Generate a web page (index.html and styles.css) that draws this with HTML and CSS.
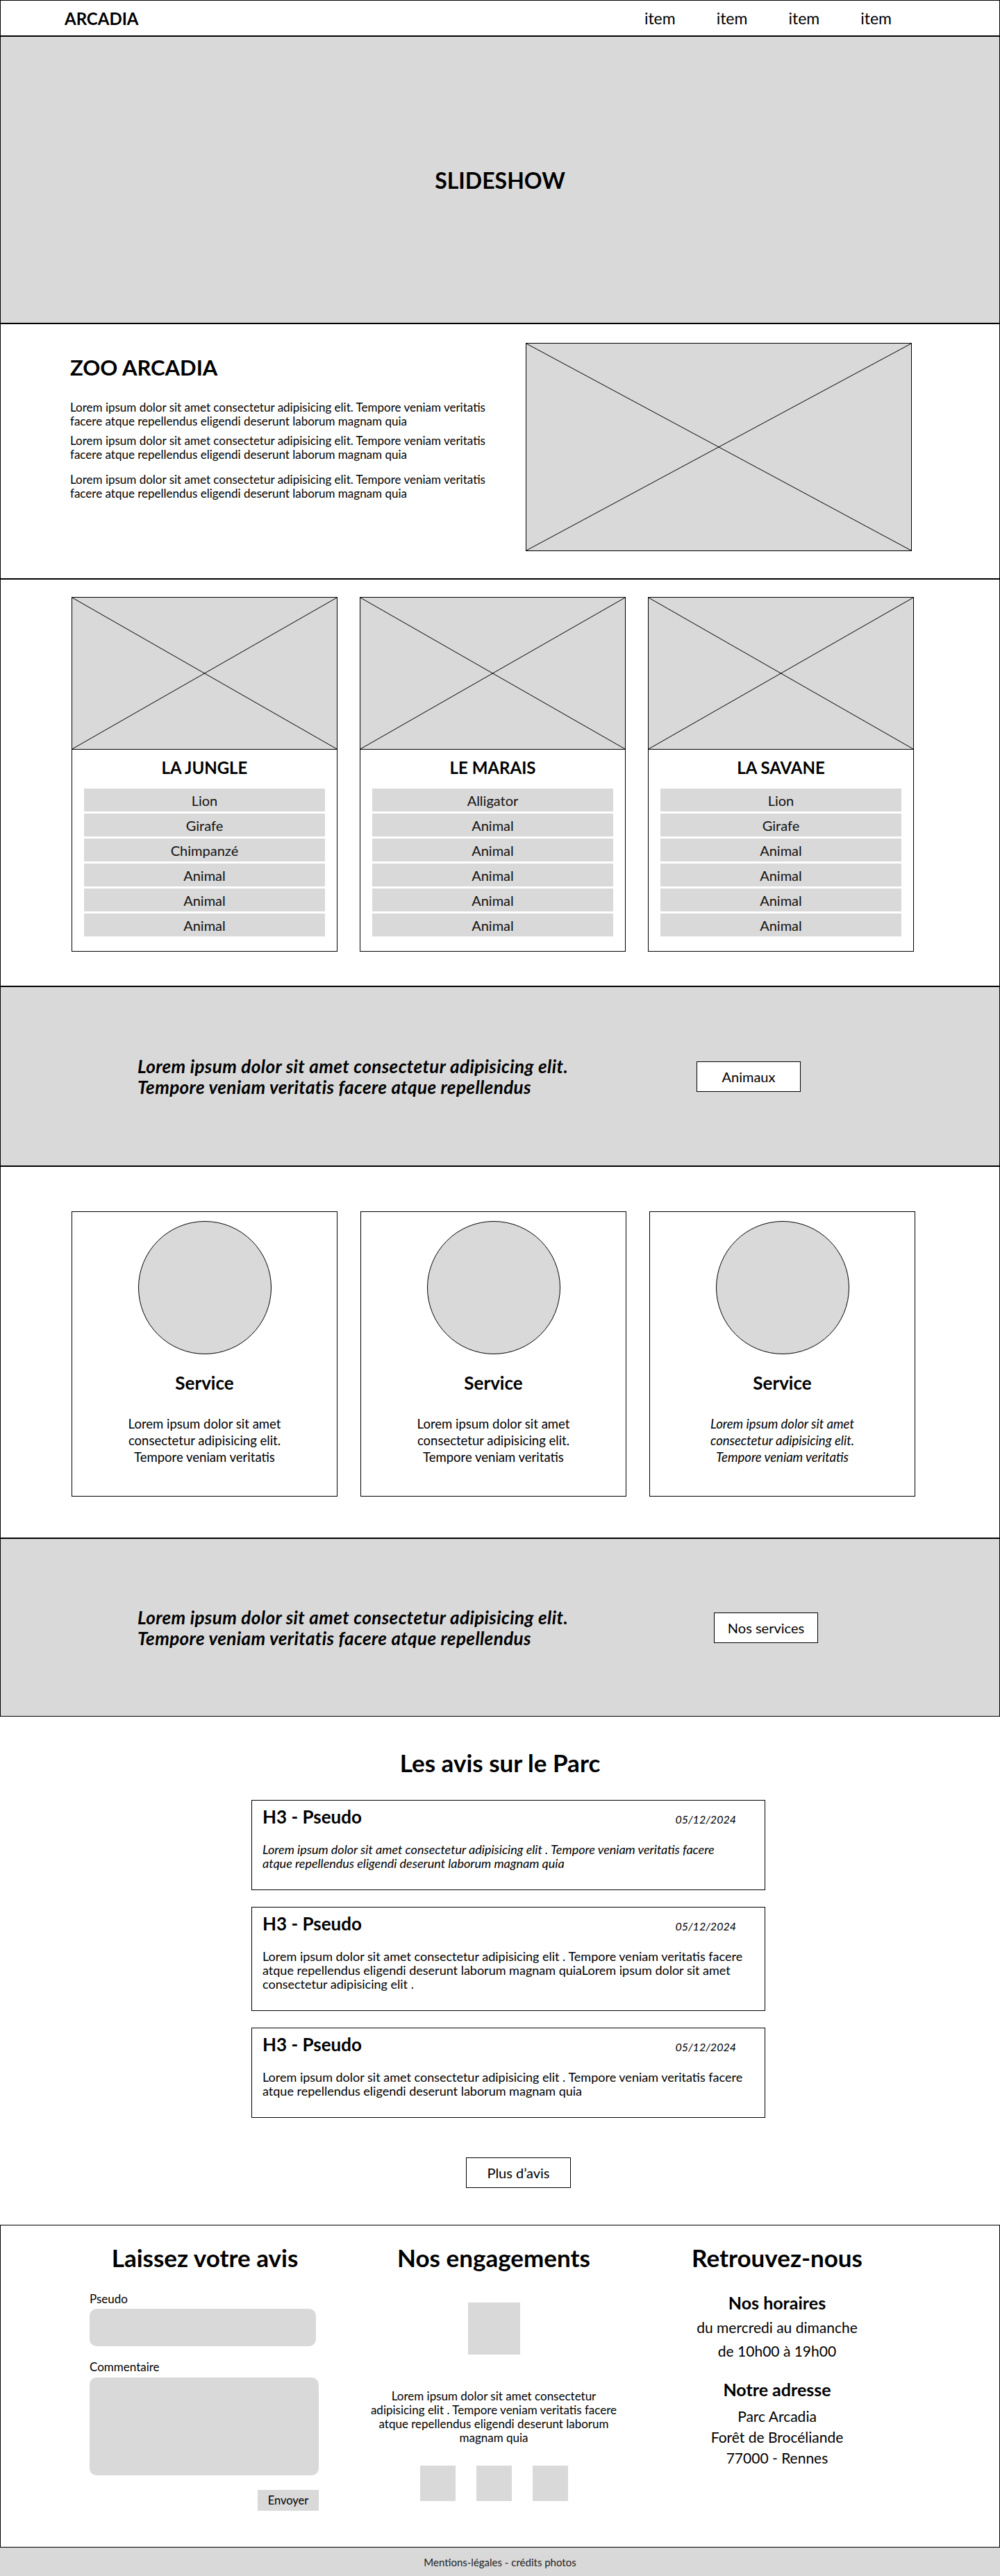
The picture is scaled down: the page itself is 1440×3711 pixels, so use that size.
FILE: index.html
```html
<!DOCTYPE html>
<html lang="fr">
<head>
    <meta charset="UTF-8">
    <meta name="viewport" content="width=device-width, initial-scale=1.0">
    <title>Arcadia</title>
    <link rel="stylesheet" href="styles.css">
</head>
<body>

<header class="topbar">
    <div class="logo">ARCADIA</div>
    <nav class="menu">
        <a href="#">item</a>
        <a href="#">item</a>
        <a href="#">item</a>
        <a href="#">item</a>
    </nav>
</header>

<section class="slideshow">
    <h1>SLIDESHOW</h1>
</section>

<section class="intro">
    <div class="intro_text">
        <h2>ZOO ARCADIA</h2>
        <p>Lorem ipsum dolor sit amet consectetur adipisicing elit. Tempore veniam veritatis<br>facere atque repellendus eligendi deserunt laborum magnam quia</p>
        <p>Lorem ipsum dolor sit amet consectetur adipisicing elit. Tempore veniam veritatis<br>facere atque repellendus eligendi deserunt laborum magnam quia</p>
        <p class="spaced">Lorem ipsum dolor sit amet consectetur adipisicing elit. Tempore veniam veritatis<br>facere atque repellendus eligendi deserunt laborum magnam quia</p>
    </div>
    <div class="placeholder intro_img">
        <svg class="cross" viewBox="0 0 100 100" preserveAspectRatio="none"><line x1="0" y1="0" x2="100" y2="100"/><line x1="100" y1="0" x2="0" y2="100"/></svg>
    </div>
</section>

<section class="zones">
    <div class="zone">
        <div class="placeholder zone_img">
            <svg class="cross" viewBox="0 0 100 100" preserveAspectRatio="none"><line x1="0" y1="0" x2="100" y2="100"/><line x1="100" y1="0" x2="0" y2="100"/></svg>
        </div>
        <h3>LA JUNGLE</h3>
        <ul class="animals">
            <li>Lion</li>
            <li>Girafe</li>
            <li>Chimpanzé</li>
            <li>Animal</li>
            <li>Animal</li>
            <li>Animal</li>
        </ul>
    </div>
    <div class="zone">
        <div class="placeholder zone_img">
            <svg class="cross" viewBox="0 0 100 100" preserveAspectRatio="none"><line x1="0" y1="0" x2="100" y2="100"/><line x1="100" y1="0" x2="0" y2="100"/></svg>
        </div>
        <h3>LE MARAIS</h3>
        <ul class="animals">
            <li>Alligator</li>
            <li>Animal</li>
            <li>Animal</li>
            <li>Animal</li>
            <li>Animal</li>
            <li>Animal</li>
        </ul>
    </div>
    <div class="zone">
        <div class="placeholder zone_img">
            <svg class="cross" viewBox="0 0 100 100" preserveAspectRatio="none"><line x1="0" y1="0" x2="100" y2="100"/><line x1="100" y1="0" x2="0" y2="100"/></svg>
        </div>
        <h3>LA SAVANE</h3>
        <ul class="animals">
            <li>Lion</li>
            <li>Girafe</li>
            <li>Animal</li>
            <li>Animal</li>
            <li>Animal</li>
            <li>Animal</li>
        </ul>
    </div>
</section>

<section class="banner">
    <p>Lorem ipsum dolor sit amet consectetur adipisicing elit.<br>Tempore veniam veritatis facere atque repellendus</p>
    <a class="btn" href="#">Animaux</a>
</section>

<section class="services">
    <div class="service">
        <div class="service_pic"></div>
        <h3>Service</h3>
        <p>Lorem ipsum dolor sit amet<br>consectetur adipisicing elit.<br>Tempore veniam veritatis</p>
    </div>
    <div class="service">
        <div class="service_pic"></div>
        <h3>Service</h3>
        <p>Lorem ipsum dolor sit amet<br>consectetur adipisicing elit.<br>Tempore veniam veritatis</p>
    </div>
    <div class="service">
        <div class="service_pic"></div>
        <h3>Service</h3>
        <p class="italic">Lorem ipsum dolor sit amet<br>consectetur adipisicing elit.<br>Tempore veniam veritatis</p>
    </div>
</section>

<section class="banner banner_services">
    <p>Lorem ipsum dolor sit amet consectetur adipisicing elit.<br>Tempore veniam veritatis facere atque repellendus</p>
    <a class="btn" href="#">Nos services</a>
</section>

<section class="reviews">
    <h2>Les avis sur le Parc</h2>
    <div class="review_list">
        <div class="review">
            <div class="review_head">
                <h3>H3 - Pseudo</h3>
                <span class="date">05/12/2024</span>
            </div>
            <p class="italic">Lorem ipsum dolor sit amet consectetur adipisicing elit . Tempore veniam veritatis facere<br>atque repellendus eligendi deserunt laborum magnam quia</p>
        </div>
        <div class="review">
            <div class="review_head">
                <h3>H3 - Pseudo</h3>
                <span class="date">05/12/2024</span>
            </div>
            <p>Lorem ipsum dolor sit amet consectetur adipisicing elit . Tempore veniam veritatis facere<br>atque repellendus eligendi deserunt laborum magnam quiaLorem ipsum dolor sit amet<br>consectetur adipisicing elit .</p>
        </div>
        <div class="review">
            <div class="review_head">
                <h3>H3 - Pseudo</h3>
                <span class="date">05/12/2024</span>
            </div>
            <p>Lorem ipsum dolor sit amet consectetur adipisicing elit . Tempore veniam veritatis facere<br>atque repellendus eligendi deserunt laborum magnam quia</p>
        </div>
    </div>
    <a class="btn btn_more" href="#">Plus d’avis</a>
</section>

<section class="infos">
    <div class="col col_form">
        <h2>Laissez votre avis</h2>
        <form class="review_form">
            <label for="pseudo">Pseudo</label>
            <input type="text" id="pseudo">
            <label for="comment" class="label_comment">Commentaire</label>
            <textarea id="comment"></textarea>
            <button type="button">Envoyer</button>
        </form>
    </div>
    <div class="col col_engage">
        <h2>Nos engagements</h2>
        <div class="engage_pic"></div>
        <p>Lorem ipsum dolor sit amet consectetur<br>adipisicing elit . Tempore veniam veritatis facere<br>atque repellendus eligendi deserunt laborum<br>magnam quia</p>
        <div class="engage_icons">
            <span></span>
            <span></span>
            <span></span>
        </div>
    </div>
    <div class="col col_contact">
        <h2>Retrouvez-nous</h2>
        <h4>Nos horaires</h4>
        <p class="hours">du mercredi au dimanche<br>de 10h00 à 19h00</p>
        <h4 class="address_title">Notre adresse</h4>
        <p class="address">Parc Arcadia<br>Forêt de Brocéliande<br>77000 - Rennes</p>
    </div>
</section>

<footer class="bottombar">Mentions-légales - crédits photos</footer>

</body>
</html>
```

FILE: styles.css
```css
* {
    box-sizing: border-box;
}

body {
    margin: 0;
    font-family: Lato, "Open Sans", sans-serif;
    color: #000000;
    background: #FFFFFF;
}

h1, h2, h3, h4, p, ul {
    margin: 0;
    padding: 0;
}

.italic {
    font-style: italic;
}

/* Header */
.topbar {
    height: 52px;
    border: 1px solid #000;
    display: flex;
    align-items: center;
    padding: 0 155px 0 92px;
}

.logo {
    font-size: 24px;
    font-weight: bold;
}

.menu {
    margin-left: auto;
    display: flex;
    gap: 59px;
}

.menu a {
    color: #000;
    text-decoration: none;
    font-size: 23px;
}

/* Slideshow */
.slideshow {
    height: 414px;
    border: 1px solid #000;
    background: #D9D9D9;
    display: flex;
    align-items: center;
    justify-content: center;
}

.slideshow h1 {
    font-size: 32px;
    font-weight: bold;
}

/* Image placeholders */
.placeholder {
    background: #D9D9D9;
}

.cross {
    display: block;
    width: 100%;
    height: 100%;
}

.cross line {
    stroke: #000;
    stroke-width: 1;
    vector-effect: non-scaling-stroke;
}

/* Intro */
.intro {
    height: 368px;
    border: 1px solid #000;
    display: grid;
    grid-template-columns: 609px 556px;
    column-gap: 47px;
    align-items: start;
    padding: 27px 0 0 100px;
}

.intro_text h2 {
    font-size: 31px;
    line-height: 36px;
    margin: 17px 0 30px;
}

.intro_text p {
    font-size: 17px;
    line-height: 20px;
    white-space: nowrap;
}

.intro_text p + p {
    margin-top: 8px;
}

.intro_text p.spaced {
    margin-top: 16px;
}

.intro_img {
    height: 300px;
    border: 1px solid #000;
}

/* Zones */
.zones {
    border: 1px solid #000;
    padding: 25px 0 49px 102px;
    display: grid;
    grid-template-columns: repeat(3, 383px);
    column-gap: 32px;
}

.zone {
    border: 1px solid #000;
    height: 511px;
}

.zone_img {
    height: 219px;
    border-bottom: 1px solid #000;
}

.zone h3 {
    font-size: 24px;
    line-height: 26px;
    text-align: center;
    margin: 13px 0 17px;
}

.animals {
    list-style: none;
    margin: 0 17px;
    display: flex;
    flex-direction: column;
    gap: 3px;
}

.animals li {
    height: 33px;
    background: #D9D9D9;
    display: flex;
    align-items: center;
    justify-content: center;
    font-size: 20px;
    color: #111;
}

/* Banners */
.banner {
    height: 259px;
    border: 1px solid #000;
    background: #D9D9D9;
    display: flex;
    align-items: center;
    padding-left: 197px;
}

.banner p {
    width: 805px;
    font-size: 26px;
    line-height: 30px;
    letter-spacing: 0.4px;
    font-weight: bold;
    font-style: italic;
}

.banner_services {
    height: 257px;
}

.banner_services p {
    width: 830px;
}

.btn {
    width: 150px;
    height: 44px;
    border: 1px solid #000;
    background: #FFFFFF;
    display: flex;
    align-items: center;
    justify-content: center;
    color: #000;
    text-decoration: none;
    font-size: 20px;
}

/* Services */
.services {
    height: 536px;
    border: 1px solid #000;
    padding: 64px 0 0 102px;
    display: grid;
    grid-template-columns: repeat(3, 383px);
    column-gap: 33px;
    align-items: start;
}

.service {
    height: 411px;
    border: 1px solid #000;
    padding-top: 13px;
    text-align: center;
}

.service_pic {
    width: 192px;
    height: 192px;
    margin: 0 auto;
    border: 1px solid #000;
    border-radius: 50%;
    background: #D9D9D9;
}

.service h3 {
    font-size: 26px;
    line-height: 28px;
    margin: 27px 0 33px;
}

.service p {
    font-size: 18.5px;
    line-height: 24px;
}

/* Reviews */
.reviews {
    height: 732px;
    padding-top: 48px;
}

.reviews h2 {
    font-size: 35px;
    line-height: 36px;
    text-align: center;
}

.review_list {
    width: 740px;
    margin: 36px 0 0 calc(50% - 358px);
    display: flex;
    flex-direction: column;
    gap: 24px;
}

.review {
    border: 1px solid #000;
    padding: 9px 41px 28px 15px;
}

.review_head {
    display: flex;
    justify-content: space-between;
    align-items: flex-end;
}

.review h3 {
    font-size: 26px;
    line-height: 28px;
}

.date {
    font-size: 16px;
    line-height: 20px;
    font-style: italic;
}

.review p {
    margin-top: 23px;
    font-size: 18px;
    line-height: 20px;
    white-space: nowrap;
}

.btn_more {
    margin: 57px 0 0 671px;
    width: 151px;
}

/* Infos */
.infos {
    height: 465px;
    border: 1px solid #000;
    padding: 27px 0 0 89px;
    display: grid;
    grid-template-columns: 410px 422px 394px;
    align-items: start;
}

.col h2 {
    font-size: 35px;
    line-height: 38px;
    text-align: center;
}

.review_form {
    display: flex;
    flex-direction: column;
    width: 330px;
    margin: 32px 0 0 39px;
}

.review_form label {
    font-size: 17px;
    line-height: 18px;
    margin-bottom: 5px;
}

.review_form .label_comment {
    margin: 21px 0 6px;
}

.review_form input,
.review_form textarea {
    border: none;
    background: #D9D9D9;
    border-radius: 10px;
    font-family: inherit;
}

.review_form input {
    width: 326px;
    height: 54px;
}

.review_form textarea {
    width: 330px;
    height: 141px;
    resize: none;
}

.review_form button {
    align-self: flex-end;
    margin-top: 21px;
    width: 88px;
    height: 30px;
    border: none;
    background: #D9D9D9;
    font-family: inherit;
    font-size: 16.5px;
    color: #000;
}

.col_engage {
    text-align: center;
}

.engage_pic {
    width: 75px;
    height: 75px;
    margin: 46px auto 0;
    background: #D9D9D9;
}

.col_engage p {
    margin-top: 50px;
    font-size: 17px;
    line-height: 20px;
}

.engage_icons {
    display: flex;
    justify-content: center;
    gap: 30px;
    margin-top: 30px;
}

.engage_icons span {
    width: 51px;
    height: 51px;
    background: #D9D9D9;
}

.col_contact {
    text-align: center;
}

.col_contact h4 {
    font-size: 25px;
    line-height: 28px;
    margin-top: 32px;
}

.col_contact .address_title {
    margin-top: 24px;
}

.hours {
    margin-top: 5px;
    font-size: 21px;
    line-height: 34px;
}

.address {
    margin-top: 10px;
    font-size: 21px;
    line-height: 30px;
}

/* Bottom bar */
.bottombar {
    height: 41px;
    background: #D9D9D9;
    display: flex;
    align-items: center;
    justify-content: center;
    font-size: 15px;
    color: #222;
}
```
